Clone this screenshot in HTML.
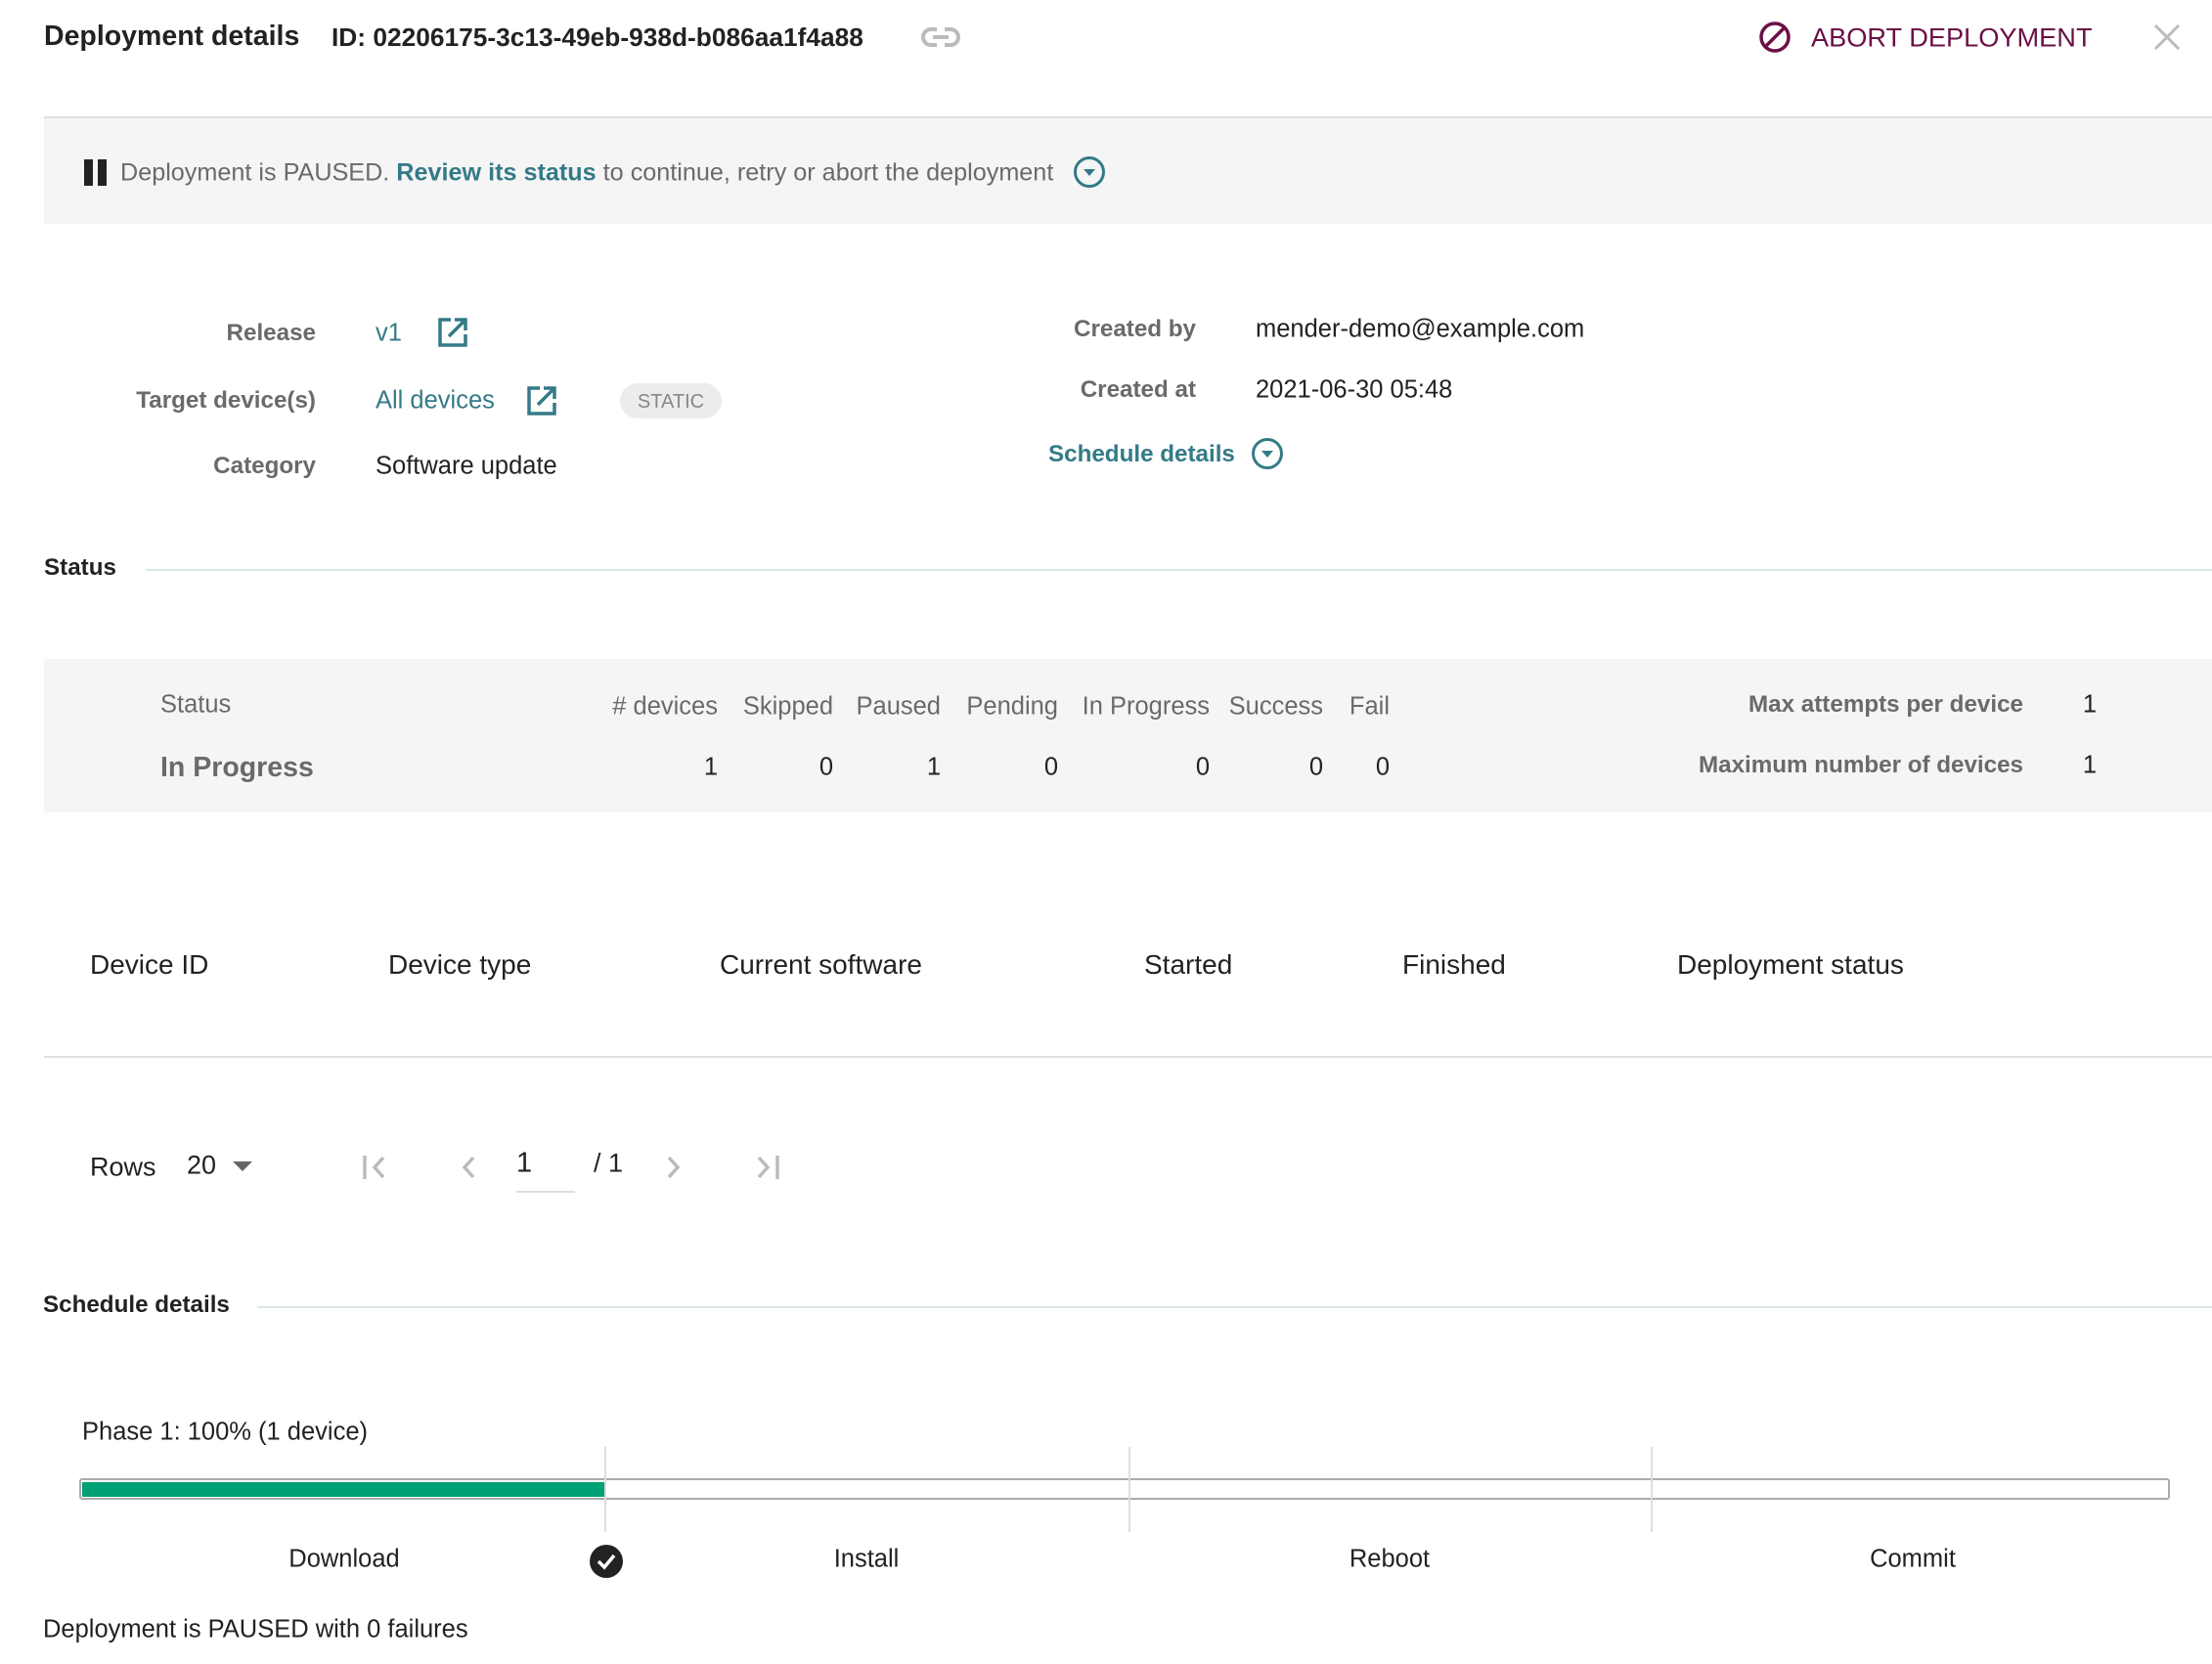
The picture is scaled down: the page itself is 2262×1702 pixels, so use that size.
<!DOCTYPE html>
<html><head><meta charset="utf-8">
<style>
html,body{margin:0;padding:0;background:#fff;}
body{width:2262px;height:1702px;position:relative;overflow:hidden;font-family:"Liberation Sans",sans-serif;color:#222;}
.t{position:absolute;white-space:nowrap;line-height:1;transform:translateY(-50%);font-size:25.5px;}
.r{transform:translate(-100%,-50%);text-align:right;}
.c{transform:translate(-50%,-50%);}
.g{color:#6a6a6a;}
.teal{color:#347a87;}
.b{font-weight:bold;}
.lb{font-size:24.2px;}
.abs{position:absolute;}
.hl{position:absolute;height:2px;}
svg{position:absolute;overflow:visible;}
</style></head><body>

<!-- header -->
<div class="t b" style="left:45px;top:37px;font-size:28.5px;">Deployment details</div>
<div class="t b" style="left:339px;top:38px;font-size:26.3px;">ID: 02206175-3c13-49eb-938d-b086aa1f4a88</div>
<svg style="left:942px;top:27px" width="40" height="22" viewBox="0 0 40 22"><rect x="2" y="3" width="36" height="16" rx="8" fill="none" stroke="#bbb" stroke-width="4"/><rect x="16" y="0" width="8" height="22" fill="#fff"/><rect x="12" y="9" width="16" height="4" fill="#bbb"/></svg>
<svg style="left:1798px;top:21px" width="34" height="34" viewBox="0 0 34 34"><circle cx="17" cy="17" r="14" fill="none" stroke="#6b0f45" stroke-width="3.5"/><line x1="7" y1="27" x2="27" y2="7" stroke="#6b0f45" stroke-width="3.5"/></svg>
<div class="t" style="left:1852px;top:38px;font-size:27.2px;color:#6b0f45;">ABORT DEPLOYMENT</div>
<svg style="left:2203px;top:25px" width="26" height="26"><line x1="1" y1="1" x2="25" y2="25" stroke="#bbb" stroke-width="3"/><line x1="25" y1="1" x2="1" y2="25" stroke="#bbb" stroke-width="3"/></svg>

<div class="hl" style="left:45px;right:0;top:119px;background:#e0e0e0;"></div>
<div class="abs" style="left:45px;right:0;top:121px;height:108px;background:#f5f5f5;"></div>
<div class="abs" style="left:86px;top:163px;width:9px;height:27px;background:#222;"></div>
<div class="abs" style="left:100px;top:163px;width:9px;height:27px;background:#222;"></div>
<div class="t g" style="left:123px;top:177px;font-size:25.2px;">Deployment is PAUSED. <span class="teal b">Review its status</span> to continue, retry or abort the deployment</div>
<svg style="left:1097px;top:159px" width="34" height="34" viewBox="0 0 34 34"><circle cx="17" cy="17" r="14.5" fill="none" stroke="#347a87" stroke-width="3"/><path d="M11 14 L23 14 L17 21 Z" fill="#347a87"/></svg>

<!-- details -->
<div class="t r g b lb" style="left:323px;top:341px;">Release</div>
<div class="t teal" style="left:384px;top:341px;">v1</div>
<svg style="left:447px;top:324px" width="32" height="32" viewBox="0 0 32 32"><path d="M14 3 H3 V29 H29 V18" fill="none" stroke="#347a87" stroke-width="3.5"/><path d="M12 20 L28 4 M18 3 H29 V14" fill="none" stroke="#347a87" stroke-width="3.5"/></svg>
<div class="t r g b lb" style="left:323px;top:410px;">Target device(s)</div>
<div class="t teal" style="left:384px;top:410px;">All devices</div>
<svg style="left:538px;top:394px" width="32" height="32" viewBox="0 0 32 32"><path d="M14 3 H3 V29 H29 V18" fill="none" stroke="#347a87" stroke-width="3.5"/><path d="M12 20 L28 4 M18 3 H29 V14" fill="none" stroke="#347a87" stroke-width="3.5"/></svg>
<div class="abs" style="left:634px;top:392px;width:104px;height:36px;border-radius:18px;background:#ececec;"></div>
<div class="t c" style="left:686px;top:411px;font-size:20px;color:#888;">STATIC</div>
<div class="t r g b lb" style="left:323px;top:477px;">Category</div>
<div class="t" style="left:384px;top:477px;">Software update</div>

<div class="t r g b lb" style="left:1223px;top:337px;">Created by</div>
<div class="t" style="left:1284px;top:337px;">mender-demo@example.com</div>
<div class="t r g b lb" style="left:1223px;top:399px;">Created at</div>
<div class="t" style="left:1284px;top:399px;">2021-06-30 05:48</div>
<div class="t teal b lb" style="left:1072px;top:465px;">Schedule details</div>
<svg style="left:1279px;top:447px" width="34" height="34" viewBox="0 0 34 34"><circle cx="17" cy="17" r="14.5" fill="none" stroke="#347a87" stroke-width="3"/><path d="M11 14 L23 14 L17 21 Z" fill="#347a87"/></svg>

<!-- status -->
<div class="t b lb" style="left:45px;top:581px;">Status</div>
<div class="hl" style="left:149px;right:0;top:582px;background:#dbe6e8;"></div>
<div class="abs" style="left:45px;right:0;top:674px;height:157px;background:#f5f5f5;"></div>
<div class="t g" style="left:164px;top:721px;">Status</div>
<div class="t g b" style="left:164px;top:785px;font-size:28.5px;">In Progress</div>
<div class="t r g" style="left:734px;top:723px;"># devices</div>
<div class="t r g" style="left:852px;top:723px;">Skipped</div>
<div class="t r g" style="left:962px;top:723px;">Paused</div>
<div class="t r g" style="left:1082px;top:723px;">Pending</div>
<div class="t r g" style="left:1237px;top:723px;">In Progress</div>
<div class="t r g" style="left:1353px;top:723px;">Success</div>
<div class="t r g" style="left:1421px;top:723px;">Fail</div>
<div class="t r" style="left:734px;top:785px;">1</div>
<div class="t r" style="left:852px;top:785px;">0</div>
<div class="t r" style="left:962px;top:785px;">1</div>
<div class="t r" style="left:1082px;top:785px;">0</div>
<div class="t r" style="left:1237px;top:785px;">0</div>
<div class="t r" style="left:1353px;top:785px;">0</div>
<div class="t r" style="left:1421px;top:785px;">0</div>
<div class="t r g b lb" style="left:2069px;top:721px;">Max attempts per device</div>
<div class="t c" style="left:2137px;top:721px;">1</div>
<div class="t r g b lb" style="left:2069px;top:783px;">Maximum number of devices</div>
<div class="t c" style="left:2137px;top:783px;">1</div>

<!-- table -->
<div class="t" style="left:92px;top:987px;font-size:28px;">Device ID</div>
<div class="t" style="left:397px;top:987px;font-size:28px;">Device type</div>
<div class="t" style="left:736px;top:987px;font-size:28px;">Current software</div>
<div class="t" style="left:1170px;top:987px;font-size:28px;">Started</div>
<div class="t" style="left:1434px;top:987px;font-size:28px;">Finished</div>
<div class="t" style="left:1715px;top:987px;font-size:28px;">Deployment status</div>
<div class="hl" style="left:45px;right:0;top:1080px;background:#e0e0e0;"></div>

<!-- pagination -->
<div class="t" style="left:92px;top:1194px;font-size:27px;">Rows</div>
<div class="t" style="left:191px;top:1192px;font-size:27px;">20</div>
<svg style="left:238px;top:1188px" width="20" height="10"><path d="M0 0 H20 L10 10 Z" fill="#666"/></svg>
<svg style="left:370px;top:1180px" width="30" height="28" viewBox="0 0 30 28"><path d="M3 2 V26" stroke="#bbb" stroke-width="3.5"/><path d="M22 4 L13 14 L22 24" fill="none" stroke="#bbb" stroke-width="3.5"/></svg>
<svg style="left:470px;top:1180px" width="20" height="28" viewBox="0 0 20 28"><path d="M14 4 L5 14 L14 24" fill="none" stroke="#bbb" stroke-width="3.5"/></svg>
<div class="t" style="left:528px;top:1190px;font-size:29px;">1</div>
<div class="hl" style="left:528px;width:60px;top:1218px;background:#ddd;"></div>
<div class="t" style="left:607px;top:1190px;font-size:27px;">/ 1</div>
<svg style="left:678px;top:1180px" width="20" height="28" viewBox="0 0 20 28"><path d="M6 4 L15 14 L6 24" fill="none" stroke="#bbb" stroke-width="3.5"/></svg>
<svg style="left:768px;top:1180px" width="30" height="28" viewBox="0 0 30 28"><path d="M8 4 L17 14 L8 24" fill="none" stroke="#bbb" stroke-width="3.5"/><path d="M27 2 V26" stroke="#bbb" stroke-width="3.5"/></svg>

<!-- schedule -->
<div class="t b lb" style="left:44px;top:1335px;">Schedule details</div>
<div class="hl" style="left:263px;right:0;top:1336px;background:#dbe6e8;"></div>
<div class="t" style="left:84px;top:1465px;">Phase 1: 100% (1 device)</div>
<div class="abs" style="left:81px;top:1512px;width:2134px;height:18px;border:2px solid #aaa;border-radius:3px;background:#fff;"></div>
<div class="abs" style="left:84px;top:1516px;width:535px;height:15px;background:#00a075;"></div>
<div class="abs" style="left:618px;top:1480px;width:2px;height:87px;background:#ddd;"></div>
<div class="abs" style="left:1154px;top:1480px;width:2px;height:87px;background:#ddd;"></div>
<div class="abs" style="left:1688px;top:1480px;width:2px;height:87px;background:#ddd;"></div>
<div class="t c" style="left:352px;top:1595px;">Download</div>
<svg style="left:603px;top:1580px" width="34" height="34" viewBox="0 0 34 34"><circle cx="17" cy="17" r="17" fill="#222"/><path d="M9 17 L15 23 L25 11" fill="none" stroke="#fff" stroke-width="3.5"/></svg>
<div class="t c" style="left:886px;top:1595px;">Install</div>
<div class="t c" style="left:1421px;top:1595px;">Reboot</div>
<div class="t c" style="left:1956px;top:1595px;">Commit</div>
<div class="t" style="left:44px;top:1667px;">Deployment is PAUSED with 0 failures</div>
</body></html>
